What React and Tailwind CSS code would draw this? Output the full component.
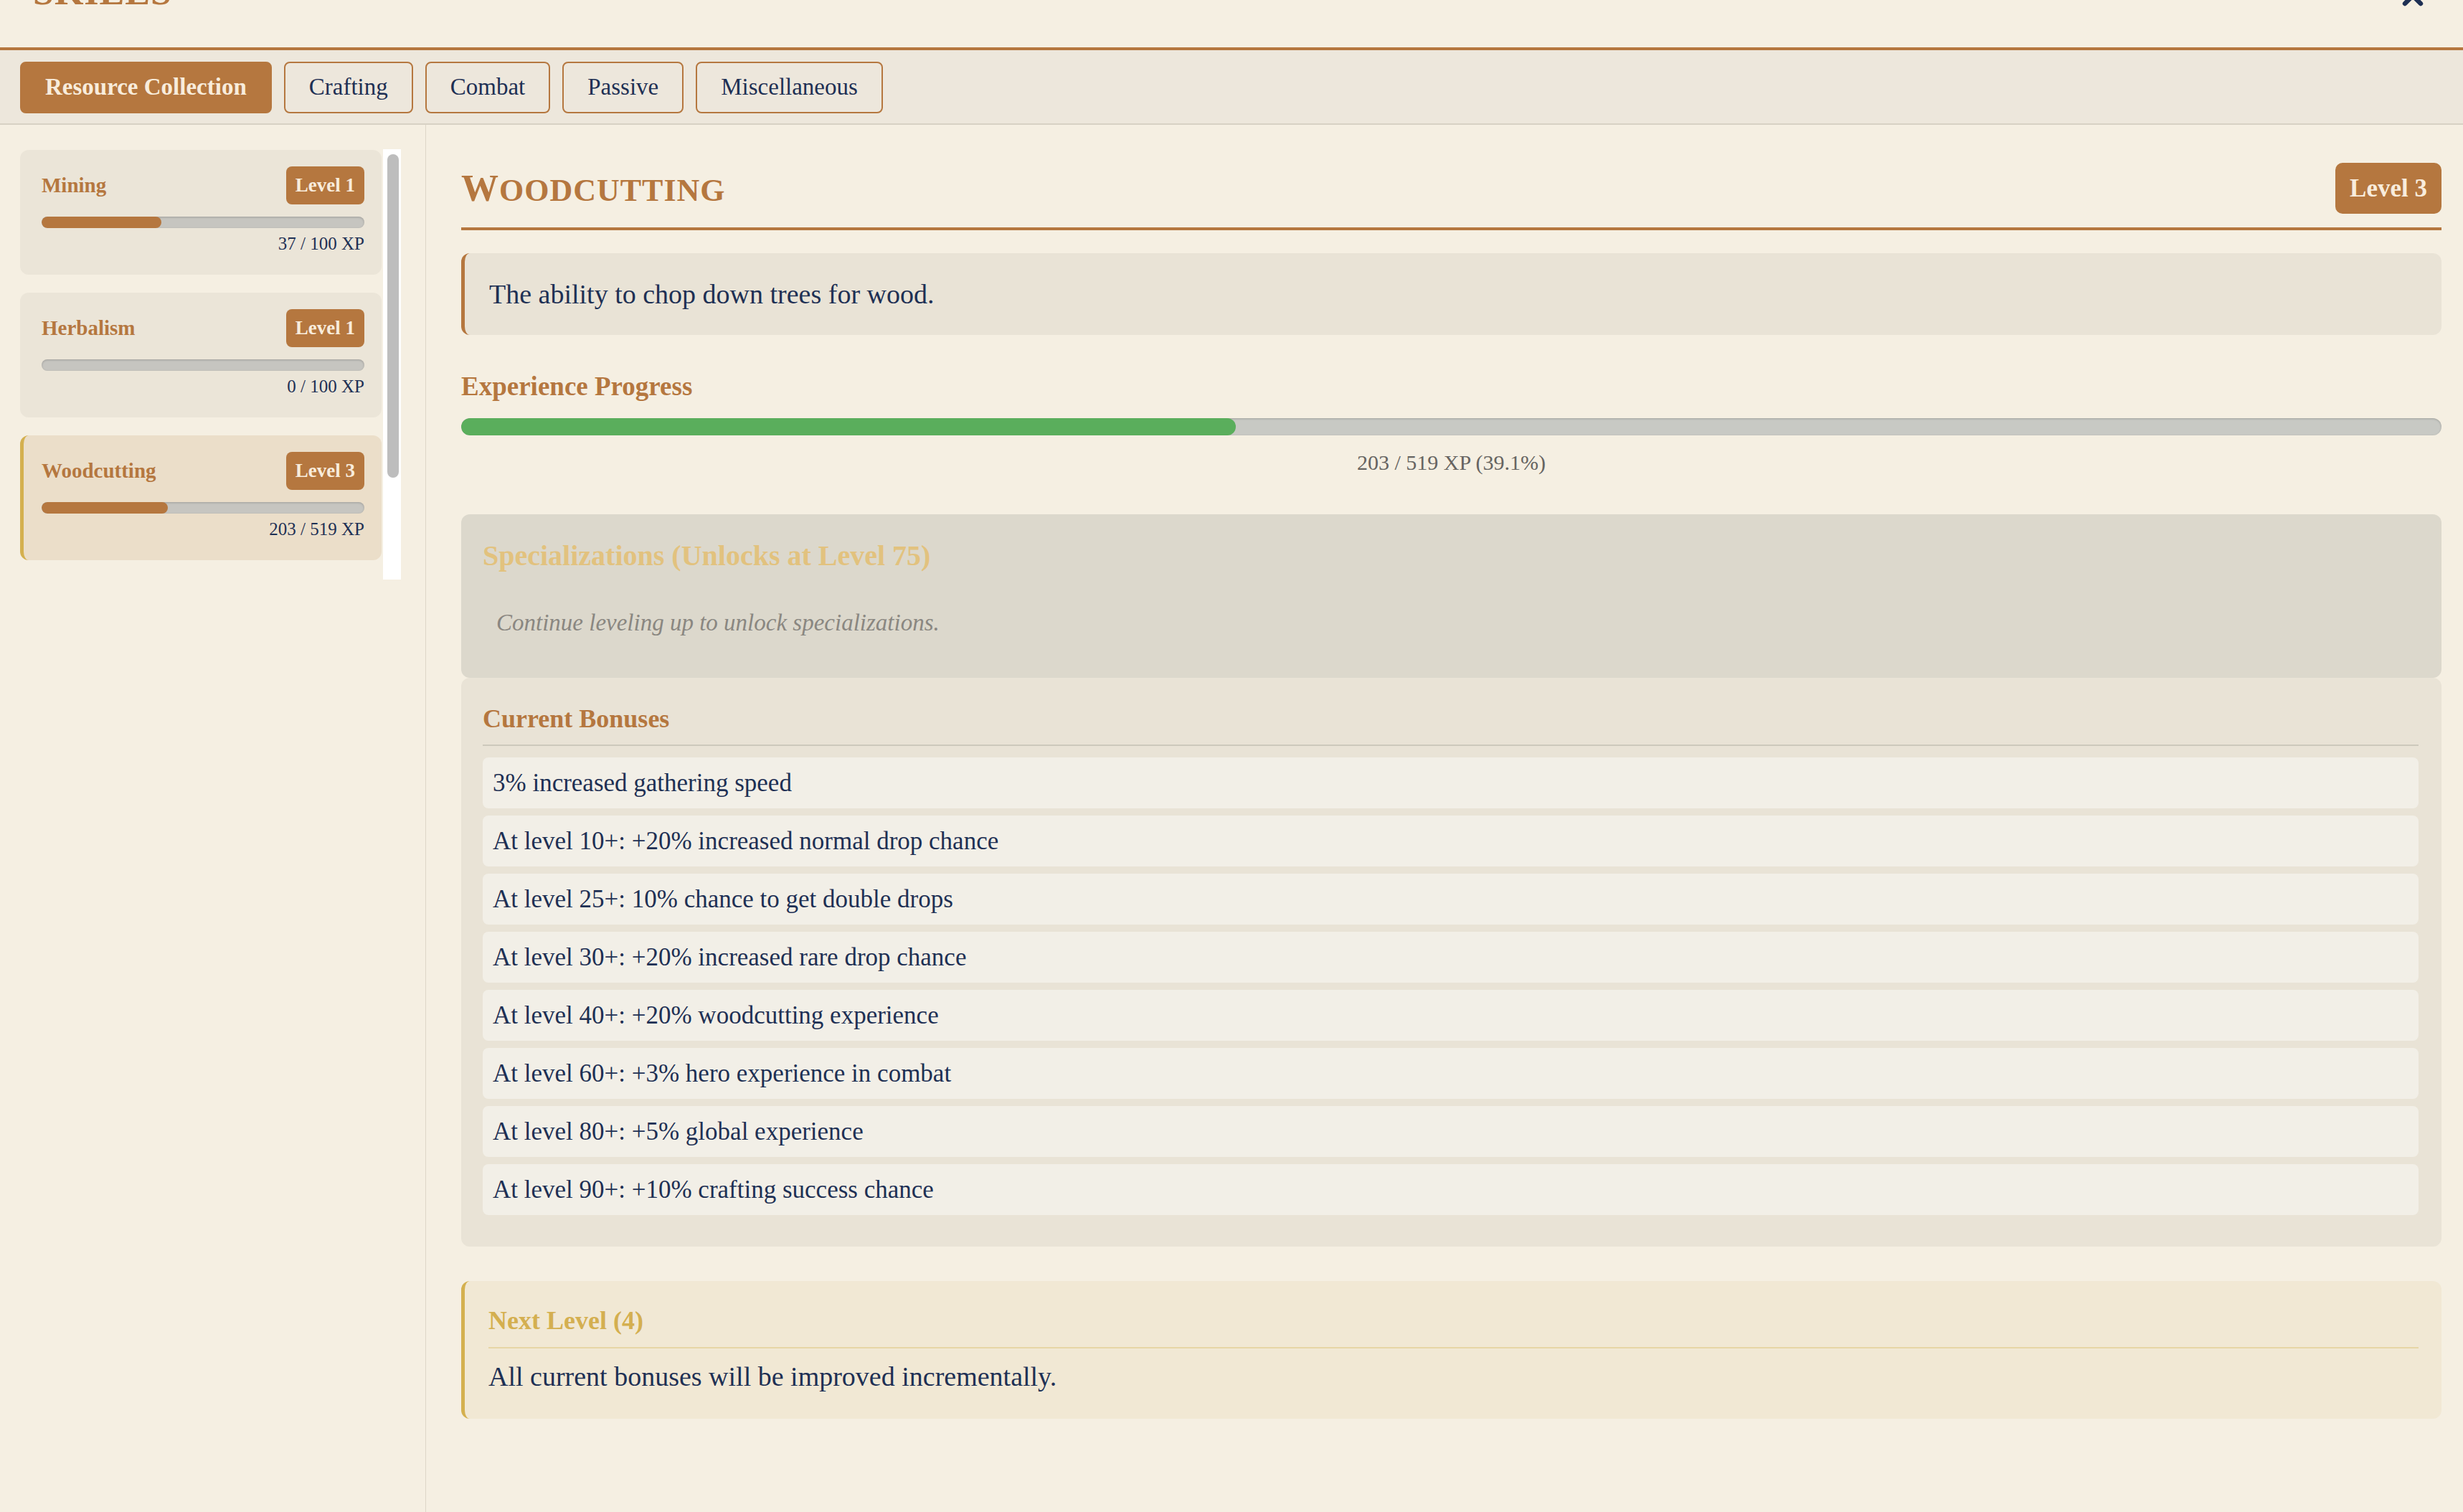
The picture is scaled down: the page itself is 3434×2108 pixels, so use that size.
import React from "react";
import { X } from "lucide-react";

const tabs = ["Resource Collection", "Crafting", "Combat", "Passive", "Miscellaneous"];

const skills = [
  { name: "Mining", level: 1, xp: 37, max: 100 },
  { name: "Herbalism", level: 1, xp: 0, max: 100 },
  { name: "Woodcutting", level: 3, xp: 203, max: 519, active: true },
];

const bonuses = [
  "3% increased gathering speed",
  "At level 10+: +20% increased normal drop chance",
  "At level 25+: 10% chance to get double drops",
  "At level 30+: +20% increased rare drop chance",
  "At level 40+: +20% woodcutting experience",
  "At level 60+: +3% hero experience in combat",
  "At level 80+: +5% global experience",
  "At level 90+: +10% crafting success chance",
];

function SkillCard({ skill }) {
  const pct = (skill.xp / skill.max) * 100;
  return (
    <div
      className={`rounded-xl pr-[24px] pt-[23px] pb-[28px] ${
        skill.active
          ? "bg-[#ebdec9] border-l-[5px] border-[#d4b04f] pl-[25px]"
          : "bg-[#ebe5d8] pl-[30px]"
      }`}
    >
      <div className="flex items-center justify-between">
        <span className="text-[29px] font-bold text-[#b5773f]">{skill.name}</span>
        <span className="bg-[#b5773f] text-[#f8ecdc] text-[27px] font-bold leading-[33px] px-[13px] py-[10px] rounded-lg">
          Level {skill.level}
        </span>
      </div>
      <div className="mt-[17px] h-[16px] rounded-full bg-[#c6c5c0] shadow-[inset_0_1px_3px_rgba(0,0,0,0.2)] overflow-hidden">
        <div className="h-full rounded-full bg-[#b5773f]" style={{ width: `${pct}%` }} />
      </div>
      <div className="mt-[7px] text-right text-[25px] leading-[30px] text-[#1e3054]">
        {skill.xp} / {skill.max} XP
      </div>
    </div>
  );
}

export default function App() {
  return (
    <div className="min-h-screen flex flex-col bg-[#f5efe2] font-['Liberation_Serif',serif] text-[#1e3054]">
      {/* header, scrolled so only the bottom of the title shows */}
      <div className="h-[70px] flex justify-between px-[46px] overflow-hidden border-b-4 border-[#b5773f]">
        <div className="-mt-[37px] text-[52px] leading-none font-bold text-[#b5773f] tracking-[1px]">
          SKILLS
        </div>
        <X className="-mt-[28px] mr-[2px] shrink-0 text-[#1e3054]" size={44} strokeWidth={3.5} />
      </div>

      {/* tab bar */}
      <div className="flex gap-[17px] px-[28px] pt-[16px] pb-[14px] bg-[#ede7dc] border-b-2 border-[#d7d1c4]">
        {tabs.map((t, i) => (
          <button
            key={t}
            className={`h-[72px] px-[33px] text-[33px] rounded-lg border-2 border-[#b5773f] ${
              i === 0 ? "bg-[#b5773f] text-[#f8ecdc] font-bold" : "bg-[#ede7dc] text-[#1e3054]"
            }`}
          >
            {t}
          </button>
        ))}
      </div>

      <div className="flex flex-1">
        {/* sidebar */}
        <div className="w-[594px] shrink-0 border-r border-[#ddd6c8] pl-[28px] pt-[34px]">
          <div className="flex gap-[2px] h-[600px]">
            <div className="w-[504px] flex flex-col gap-[25px] pt-[1px]">
              {skills.map((s) => (
                <SkillCard key={s.name} skill={s} />
              ))}
            </div>
            <div className="w-[25px] h-[600px] bg-white pt-[7px] pl-[6px]">
              <div className="w-[16px] h-[451px] rounded-full bg-[#bdbdbd]" />
            </div>
          </div>
        </div>

        {/* main */}
        <div className="flex-1 pl-[49px] pr-[30px] pt-[53px] pb-[60px]">
          <div className="flex items-center justify-between pb-[19px] border-b-4 border-[#b5773f]">
            <h1 className="font-bold text-[#b5773f] tracking-[1px] leading-none">
              <span className="text-[52px]">W</span>
              <span className="text-[44px]">OODCUTTING</span>
            </h1>
            <span className="bg-[#b5773f] text-[#f8ecdc] text-[35px] font-bold leading-[43px] px-[20px] py-[14px] rounded-[10px]">
              Level 3
            </span>
          </div>

          <div className="mt-[32px] rounded-xl bg-[#e9e3d6] border-l-[5px] border-[#b5773f] pl-[34px] py-[28px] text-[38px] leading-[58px]">
            The ability to chop down trees for wood.
          </div>

          <div className="mt-[50px] text-[37px] leading-[44px] font-bold text-[#b5773f]">
            Experience Progress
          </div>
          <div className="mt-[22px] h-[24px] rounded-full bg-[#c8c9c4] shadow-[inset_0_1px_3px_rgba(0,0,0,0.2)] overflow-hidden">
            <div className="h-full rounded-full bg-[#5aae5c]" style={{ width: "39.1%" }} />
          </div>
          <div className="mt-[20px] text-center text-[30px] leading-[36px] text-[#666461]">
            203 / 519 XP (39.1%)
          </div>

          <div className="mt-[54px] rounded-xl bg-[#dcd8cc] px-[30px] pt-[34px] pb-[32px]">
            <div className="text-[40px] leading-[48px] font-bold text-[#e2c27e]">
              Specializations (Unlocks at Level 75)
            </div>
            <p className="mt-[24px] py-[20px] px-[19px] italic text-[33px] leading-[50px] text-[#8a8781]">
              Continue leveling up to unlock specializations.
            </p>
          </div>

          <div className="rounded-xl bg-[#e9e3d6] pl-[30px] pr-[32px] pt-[36px] pb-[34px]">
            <div className="text-[36px] leading-[43px] font-bold text-[#b5773f] pb-[14px] border-b-2 border-[#cdc9bc]">
              Current Bonuses
            </div>
            <div className="mt-[16px] flex flex-col gap-[10px]">
              {bonuses.map((b) => (
                <div
                  key={b}
                  className="rounded-lg bg-[#f2efe7] px-[14px] py-[14px] text-[35px] leading-[43px]"
                >
                  {b}
                </div>
              ))}
            </div>
            <div className="h-[10px]" />
          </div>

          <div className="mt-[48px] rounded-xl bg-[#f1e8d4] border-l-[5px] border-[#d4b04f] pl-[33px] pr-[32px] pt-[34px] pb-[36px]">
            <div className="text-[36px] leading-[43px] font-bold text-[#d4af50] pb-[15px] border-b-2 border-[#e6d6a6]">
              Next Level (4)
            </div>
            <div className="mt-[17px] text-[38px] leading-[45px]">
              All current bonuses will be improved incrementally.
            </div>
          </div>
        </div>
      </div>
    </div>
  );
}
